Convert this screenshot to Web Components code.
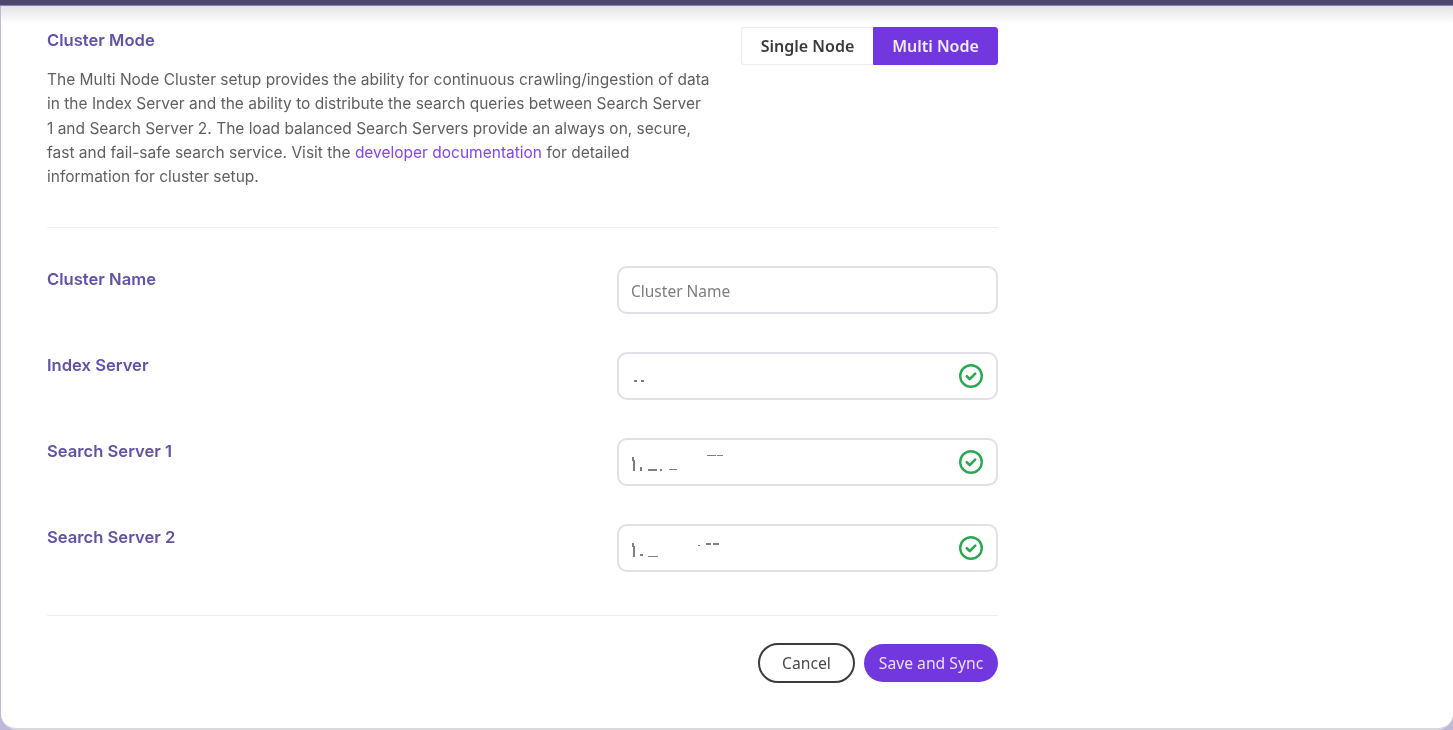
<!DOCTYPE html>
<html lang="en">
<head>
<meta charset="utf-8">
<title>Cluster Mode</title>
<style>
  html, body { margin: 0; height: 100%; background: #bdb9d8; overflow: hidden; }
  body { font-family: Inter, "Liberation Sans", sans-serif; }
</style>
</head>
<body>
<cluster-panel>
  <mode-section>
    The Multi Node Cluster setup provides the ability for continuous crawling/ingestion of data<br>
    in the Index Server and the ability to distribute the search queries between Search Server<br>
    1 and Search Server 2. The load balanced Search Servers provide an always on, secure,<br>
    fast and fail-safe search service. Visit the <a href="#" style="color:#8445ec;text-decoration:none">developer documentation</a> for detailed<br>
    information for cluster setup.
  </mode-section>
  <form-row label="Cluster Name"><text-field placeholder="Cluster Name"></text-field></form-row>
  <form-row label="Index Server"><text-field valid smudge="a"></text-field></form-row>
  <form-row label="Search Server 1"><text-field valid smudge="b"></text-field></form-row>
  <form-row label="Search Server 2"><text-field valid smudge="c"></text-field></form-row>
  <form-actions>
    <pill-button>Cancel</pill-button>
    <pill-button primary>Save and Sync</pill-button>
  </form-actions>
</cluster-panel>

<script>
// panel with the dark strip on top
class ClusterPanel extends HTMLElement {
  constructor() {
    super();
    this.attachShadow({ mode: 'open' });
    this.shadowRoot.innerHTML = `
      <style>
        :host { display: flex; flex-direction: column; height: 730px; box-sizing: border-box; }
        .strip { height: 5px; flex: none; background: #4f4670; border-bottom: 1px solid #8a86a0; }
        .sheet {
          flex: 1;
          background: #fff linear-gradient(#e4e4e6, #fff 18px);
          margin-left: 1px;
          border-radius: 0 0 16px 16px;
          border-bottom: 2px solid #d9d8dc;
          padding: 0 455px 0 46px;
          display: flex;
          flex-direction: column;
        }
        /* the source shot is slightly soft */
        .soft { filter: blur(.35px); display: flex; flex-direction: column; flex: 1; }
      </style>
      <div class="strip"></div>
      <div class="sheet"><div class="soft"><slot></slot></div></div>
    `;
  }
}

class ModeSection extends HTMLElement {
  constructor() {
    super();
    this.attachShadow({ mode: 'open' });
    this.shadowRoot.innerHTML = `
      <style>
        :host { display: flex; justify-content: space-between; border-bottom: 1px solid #efeef4; height: 222px; box-sizing: border-box; padding-top: 23px; margin-bottom: 38px; }
        h2 { margin: 0 0 17px; font-size: 16.6px; line-height: 22px; font-weight: 600; color: #6350a8; }
        p { margin: 0; white-space: nowrap; font-size: 15.5px; line-height: 24.3px; color: #5f5f5f; }
        mode-toggle { margin-top: -2px; }
      </style>
      <div>
        <h2>Cluster Mode</h2>
        <p><slot></slot></p>
      </div>
      <mode-toggle></mode-toggle>
    `;
  }
}

class ModeToggle extends HTMLElement {
  constructor() {
    super();
    this.attachShadow({ mode: 'open' });
    this.shadowRoot.innerHTML = `
      <style>
        :host { display: inline-flex; height: 38px; font: 600 16px "Noto Sans", sans-serif; }
        button { font: inherit; border: 1px solid #ececf0; background: #fff; color: #3a3a3a; padding: 0; cursor: pointer; }
        .single { width: 132px; border-radius: 3px 0 0 3px; border-right: 0; }
        .multi { width: 125px; background: #7337e0; border-color: #7337e0; color: #f3ecff; border-radius: 0 3px 3px 0; }
      </style>
      <button class="single">Single Node</button>
      <button class="multi">Multi Node</button>
    `;
  }
}

class FormRow extends HTMLElement {
  constructor() {
    super();
    this.attachShadow({ mode: 'open' });
    this.shadowRoot.innerHTML = `
      <style>
        :host { display: flex; justify-content: space-between; align-items: flex-start; margin-bottom: 38px; }
        label { font-size: 16.6px; line-height: 22px; font-weight: 600; color: #6350a8; padding-top: 2px; }
      </style>
      <label></label>
      <slot></slot>
    `;
    this.shadowRoot.querySelector('label').textContent = this.getAttribute('label');
  }
}

// leftovers of the blanked out addresses, x y w h
const SMUDGES = {
  a: [[15, 26, 3, 2], [22, 26, 3, 2]],
  b: [[13, 17, 2, 4], [14, 20, 2, 11], [21, 27, 2, 4], [29, 29, 9, 2], [41, 29, 2, 2], [50, 29, 8, 1], [88, 15, 9, 1], [98, 15, 6, 1]],
  c: [[13, 17, 2, 4], [14, 20, 2, 11], [21, 28, 3, 2], [29, 30, 10, 1], [79, 19, 2, 1], [87, 17, 5, 2], [94, 17, 6, 2]]
};

class TextField extends HTMLElement {
  constructor() {
    super();
    this.attachShadow({ mode: 'open' });
    const smudge = (SMUDGES[this.getAttribute('smudge')] || [])
      .map(([x, y, w, h]) => `<i style="left:${x}px;top:${y}px;width:${w}px;height:${h}px"></i>`).join('');
    const tick = this.hasAttribute('valid') ? `
      <svg width="26" height="26" viewBox="0 0 26 26" fill="none" stroke="#2aa84f">
        <circle cx="13" cy="13" r="10.8" stroke-width="2.4"/>
        <path d="M8.8 13.2l3 2.9 5.4-5.4" stroke-width="2.6" stroke-linecap="round" stroke-linejoin="round"/>
      </svg>` : '';
    this.shadowRoot.innerHTML = `
      <style>
        :host { display: flex; position: relative; align-items: center; box-sizing: border-box; width: 381px; height: 48px; padding: 0 13px 0 12px; border: 2px solid #dfe1e6; border-radius: 10px; background: #fff; }
        input { flex: 1; min-width: 0; border: 0; outline: 0; padding: 2px 0 0; background: none; font: 15.5px "Noto Sans", sans-serif; color: #444; }
        input::placeholder { color: #7d7d7d; opacity: 1; }
        i { position: absolute; background: #7d7d86; }
        svg { margin-right: -1px; }
      </style>
      <input placeholder="${this.getAttribute('placeholder') || ''}">
      ${smudge}
      ${tick}
    `;
  }
}

class FormActions extends HTMLElement {
  constructor() {
    super();
    this.attachShadow({ mode: 'open' });
    this.shadowRoot.innerHTML = `
      <style>
        :host { display: flex; justify-content: flex-end; align-items: center; gap: 9px; border-top: 1px solid #efeef4; margin-top: 5px; padding-top: 27px; }
      </style>
      <slot></slot>
    `;
  }
}

class PillButton extends HTMLElement {
  constructor() {
    super();
    this.attachShadow({ mode: 'open' });
    this.shadowRoot.innerHTML = `
      <style>
        :host { display: inline-flex; }
        button { font: 15.7px "Noto Sans", sans-serif; cursor: pointer; box-sizing: border-box; width: 97px; height: 40px; border: 2px solid #3b3b3b; border-radius: 20px; background: #fff; color: #4a4a4a; padding: 0; }
        :host([primary]) button { width: 134px; height: 38px; border: 0; border-radius: 19px; background: #7337e0; color: #eadfff; }
      </style>
      <button><slot></slot></button>
    `;
  }
}

customElements.define('cluster-panel', ClusterPanel);
customElements.define('mode-toggle', ModeToggle);
customElements.define('mode-section', ModeSection);
customElements.define('form-row', FormRow);
customElements.define('text-field', TextField);
customElements.define('form-actions', FormActions);
customElements.define('pill-button', PillButton);
</script>
</body>
</html>
